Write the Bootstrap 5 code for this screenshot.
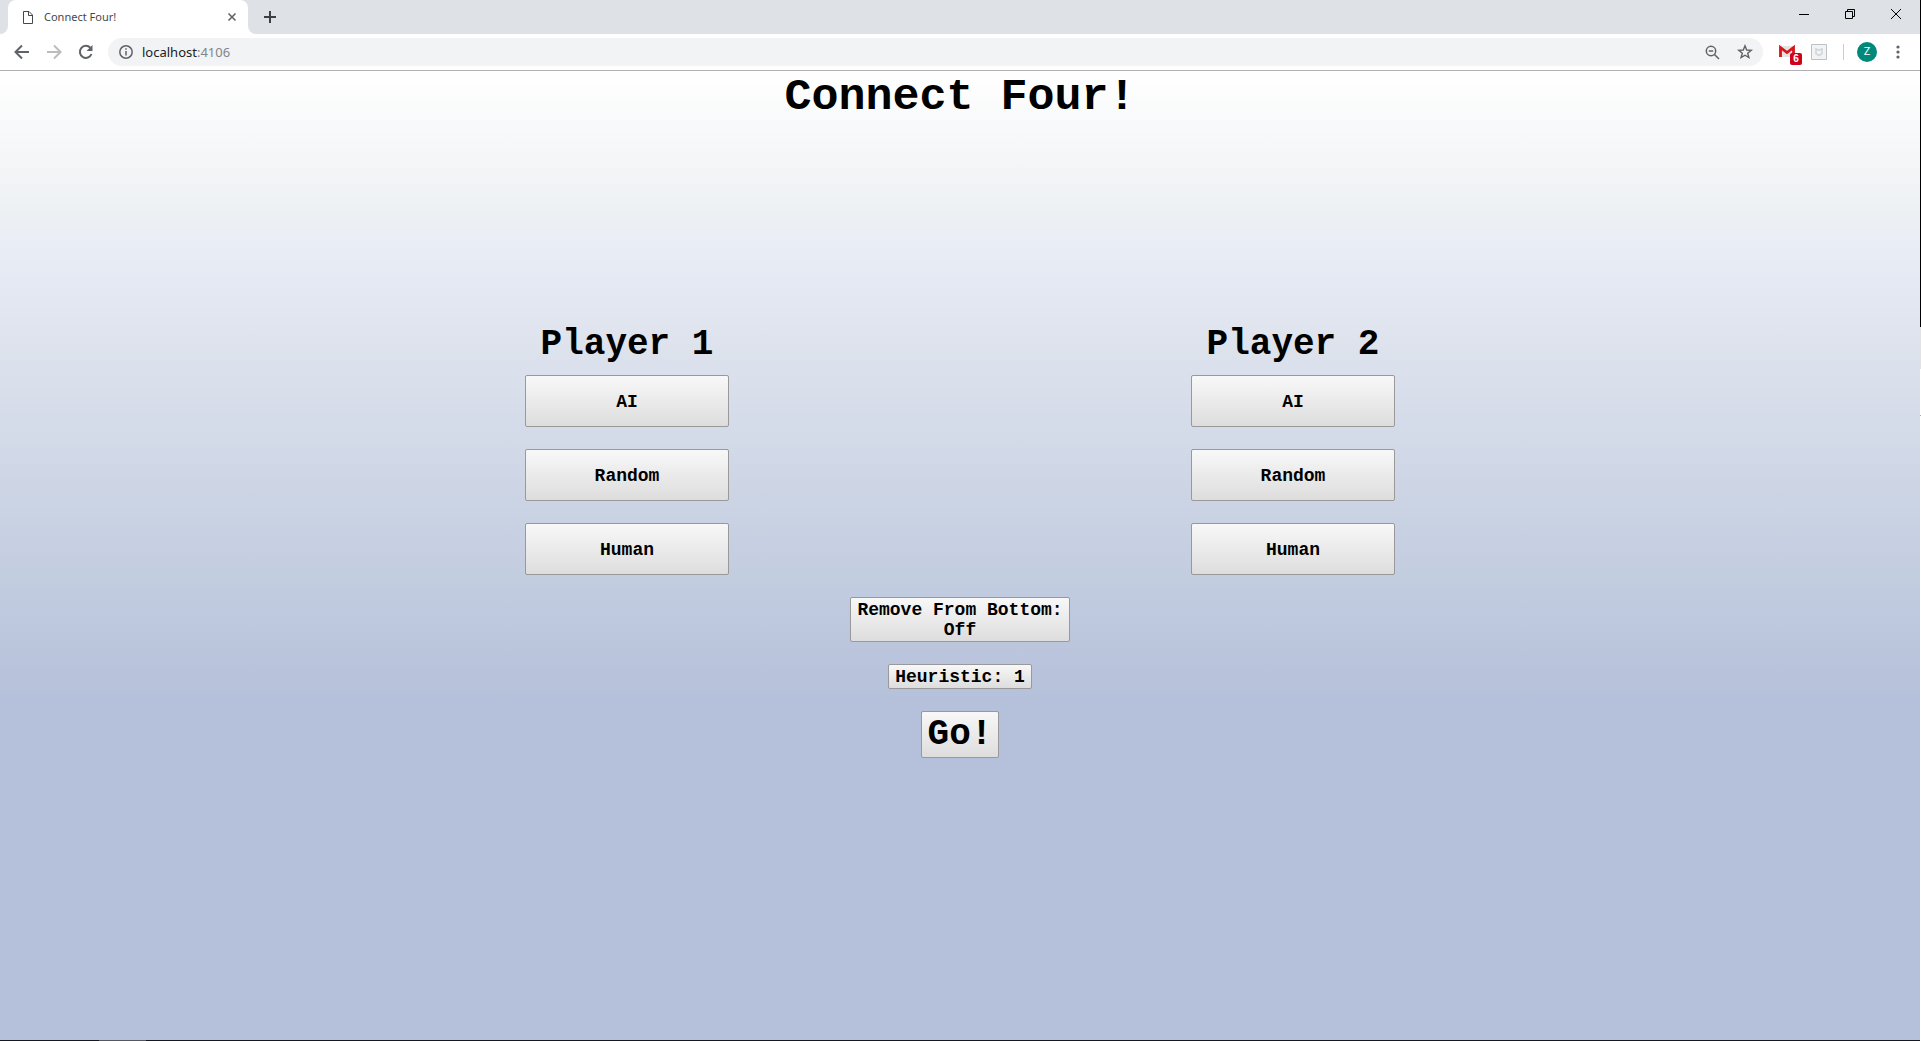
<!DOCTYPE html>
<html lang="en">
<head>
<meta charset="utf-8">
<meta name="viewport" content="width=device-width, initial-scale=1">
<title>Connect Four!</title>
<link href="https://cdn.jsdelivr.net/npm/bootstrap@5.3.0/dist/css/bootstrap.min.css" rel="stylesheet">
<style>
  body { font-family: "Noto Sans", "Open Sans", sans-serif; color: #000; padding-right: 1px; background: linear-gradient(#000 327px, #e2e2e2 327px, #e2e2e2 369px, #fff 369px, #fff 415px, #aaa 415px, #aaa 416px, #fff 416px); }
  button { padding: 0; border: 0; background: none; color: #5f6368; }
  svg { display: block; fill: none; stroke: currentColor; }
  /* browser chrome */
  .tabstrip { height: 34px; background: #dee1e6; }
  .leftcap { width: 8px; border-bottom-right-radius: 8px; background: #dee1e6; }
  .leftcap-wrap, .rightcap-wrap { background: #fff; align-self: flex-end; height: 8px; display: flex; }
  .rightcap { width: 8px; border-bottom-left-radius: 8px; background: #dee1e6; }
  .tab-on { width: 240px; background: #fff; border-radius: 8px 8px 0 0; padding: 0 11px 0 14px; gap: 10px; font-size: 11px; color: #45494d; }
  .newtab { margin-left: 7px; color: #3c4043; }
  .wincontrols { gap: 34px; margin-right: 18px; padding-bottom: 6px; }
  .wincontrols button { color: #000; }
  .toolbar { height: 37px; background: #fff; border-bottom: 1px solid #b0b0b2; padding: 0 14px 0 14px; }
  .navset { gap: 16px; margin-right: 14px; }
  .omni { height: 28px; border-radius: 14px; background: #f1f3f4; padding: 0 10px 0 11px; gap: 9px; color: #5f6368; }
  .addr { font-size: 13px; line-height: 20px; color: #202124; }
  .addr span { color: #80868b; }
  .extset { gap: 16px; margin-left: 16px; }
  .tailset { gap: 13px; }
  .mailcount { position: absolute; left: 11px; top: 9px; width: 12px; height: 12px; border-radius: 2px; background: #d0021b; color: #fff; font: bold 10px/12px "Liberation Sans", sans-serif; text-align: center; }
  .divline { width: 1px; height: 16px; background: #ccced1; }
  .avatar { width: 20px; height: 20px; border-radius: 50%; background: #00897b; color: #fff; font: 11px/20px Roboto, sans-serif; }
  .dim { color: #babcbe; }
  /* game page */
  .game { font-family: "Courier New", "Liberation Mono", monospace; font-weight: bold; padding-top: 2px; background: linear-gradient(#fff 0%, #edf0f3 15%, #e9edf6 18%, #dfe4ee 27%, #c3cde0 52%, #b5c0da 65%); }
  .game h1 { font-size: 45px; line-height: 50px; font-weight: bold; margin: 0 0 202px; }
  .game h2 { font-size: 36px; line-height: 40px; font-weight: bold; margin: 0 0 10px; }
  .players { gap: 462px; }
  .pick { width: 204px; }
  .key { border: 1px solid #999; border-radius: 2px; background: linear-gradient(#f8f8f8, #ddd); color: #000; font-weight: bold; font-size: 18px; line-height: 20px; padding: 2px 6px 1px; }
  .key-wide { width: 204px; height: 52px; margin-bottom: 22px; }
  .key-rule { width: 220px; }
  .key-go { font-size: 36px; line-height: 42px; }
  .options { gap: 22px; }
  .taskedge { height: 1px; background: linear-gradient(90deg, #15181f 99px, #55585f 99px, #55585f 146px, #15181f 146px); }
</style>
</head>
<body class="min-vh-100 d-flex flex-column">
<header>
  <div class="tabstrip d-flex">
    <div class="leftcap-wrap"><div class="leftcap"></div></div>
    <div class="tab-on d-flex align-items-center">
      <svg width="12" height="16" viewBox="0 0 12 16"><path d="M1.500 2.500H7L10.500 6V14.500H1.500ZM6.500 2.500V6.500H10.500" /></svg>
      <span class="flex-grow-1">Connect Four!</span>
      <button aria-label="Close tab"><svg width="10" height="10" viewBox="0 0 10 10" stroke-width="1.600"><path d="M1.500 1.500L8.500 8.500M8.500 1.500L1.500 8.500"/></svg></button>
    </div>
    <div class="rightcap-wrap"><div class="rightcap"></div></div>
    <button class="newtab" aria-label="New tab"><svg width="14" height="14" viewBox="0 0 14 14" stroke-width="2"><path d="M7 1V13M1 7H13"/></svg></button>
    <div class="wincontrols d-flex align-items-center ms-auto">
      <button aria-label="Minimize"><svg width="12" height="12" viewBox="0 0 12 12"><path d="M1 6.500H11"/></svg></button>
      <button aria-label="Restore"><svg width="12" height="12" viewBox="0 0 12 12"><path d="M1.500 3.500H8.500V10.500H1.500ZM3.500 3V1.500H10.500V8.500H9"/></svg></button>
      <button aria-label="Close"><svg width="12" height="12" viewBox="0 0 12 12"><path d="M1 1L11 11M11 1L1 11"/></svg></button>
    </div>
  </div>
  <div class="toolbar d-flex align-items-center">
    <div class="navset d-flex">
      <button aria-label="Back"><svg width="16" height="16" viewBox="0 0 16 16" stroke-width="2"><path d="M15 8H2M8 1.500L1.500 8L8 14.500"/></svg></button>
      <button class="dim" aria-label="Forward"><svg width="16" height="16" viewBox="0 0 16 16" stroke-width="2"><path d="M1 8H14M8 1.500L14.500 8L8 14.500"/></svg></button>
      <button aria-label="Reload"><svg width="16" height="16" viewBox="0 0 16 16" stroke-width="2"><path d="M13.500 10A6 6 0 1 1 12.300 3.800"/><path d="M14.500 1V7H8.500Z" fill="currentColor" stroke="none"/></svg></button>
    </div>
    <div class="omni d-flex align-items-center flex-grow-1">
      <svg width="14" height="14" viewBox="0 0 14 14" stroke-width="1.500"><circle cx="7" cy="7" r="6.200"/><path d="M7 6V10.500M7 3.300V4.800"/></svg>
      <a class="addr text-decoration-none flex-grow-1" href="#">localhost<span>:4106</span></a>
      <button aria-label="Zoom"><svg width="15" height="15" viewBox="0 0 15 15" stroke-width="1.500"><circle cx="6" cy="6" r="4.700"/><path d="M9.500 9.500L14 14M3.800 6H8.200"/></svg></button>
      <button class="ms-2" aria-label="Bookmark this page"><svg width="16" height="16" viewBox="0 0 16 16" stroke-width="1.400"><path d="M8 1.800L9.700 6L14.200 6.300L10.700 9.200L11.900 13.600L8 11.200L4.100 13.600L5.300 9.200L1.800 6.300L6.300 6Z"/></svg></button>
    </div>
    <div class="extset d-flex align-items-center">
      <button class="position-relative" aria-label="Mail, 6 unread"><svg width="16" height="16" viewBox="0 0 16 16"><path d="M0 2H16V13H0Z" fill="#e4e4e4" stroke="none"/><path d="M1.500 13V3.500L8 8.500L14.500 3.500V13" stroke="#d8141c" stroke-width="2.800"/></svg><span class="mailcount">6</span></button>
      <button aria-label="Shield"><svg width="16" height="16" viewBox="0 0 16 16"><path d="M.5 .5H15.500V15.500H.5Z" stroke="#bcc3c8" fill="#f1f3f4"/><path d="M5 5L8 6.300L11 5V9.500L8 11.500L5 9.500Z" stroke="#d0d4d7" stroke-width="1.500"/></svg></button>
      <div class="tailset d-flex align-items-center">
        <div class="divline"></div>
        <button class="avatar" aria-label="Profile">Z</button>
        <button aria-label="Menu"><svg width="16" height="16" viewBox="0 0 16 16"><g fill="#5f6368" stroke="none"><circle cx="8" cy="3" r="1.600"/><circle cx="8" cy="8" r="1.600"/><circle cx="8" cy="13" r="1.600"/></g></svg></button>
      </div>
    </div>
  </div>
</header>
<main class="game flex-grow-1 text-center">
  <h1>Connect Four!</h1>
  <div class="players d-flex justify-content-center">
    <section class="pick">
      <h2>Player 1</h2>
      <button class="key key-wide">AI</button>
      <button class="key key-wide">Random</button>
      <button class="key key-wide">Human</button>
    </section>
    <section class="pick">
      <h2>Player 2</h2>
      <button class="key key-wide">AI</button>
      <button class="key key-wide">Random</button>
      <button class="key key-wide">Human</button>
    </section>
  </div>
  <div class="options d-flex flex-column align-items-center">
    <button class="key key-rule">Remove From Bottom: Off</button>
    <button class="key">Heuristic: 1</button>
    <button class="key key-go">Go!</button>
  </div>
</main>
<div class="taskedge"></div>
<script src="https://cdn.jsdelivr.net/npm/bootstrap@5.3.0/dist/js/bootstrap.bundle.min.js"></script>
</body>
</html>
